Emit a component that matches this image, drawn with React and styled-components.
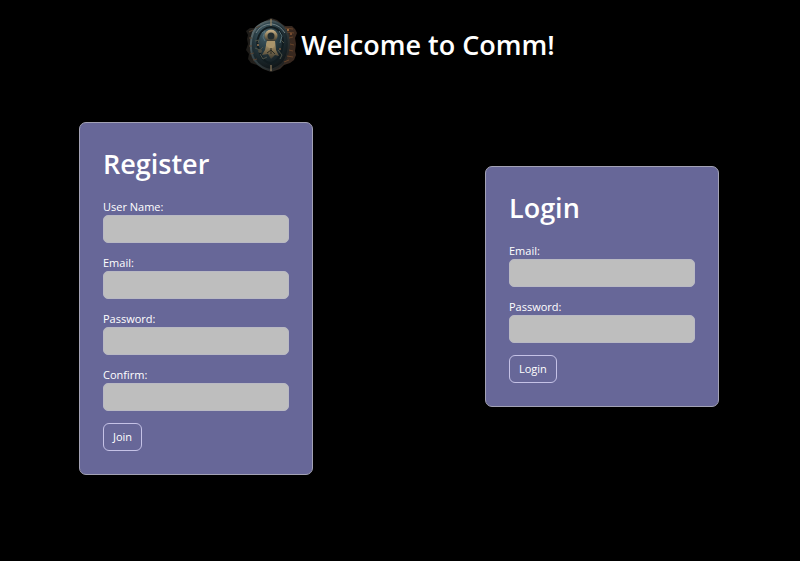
import React, { useId } from "react";
import styled, { createGlobalStyle } from "styled-components";

const GlobalStyle = createGlobalStyle`
  * { box-sizing: border-box; }
  body {
    margin: 0;
    background: #000;
    color: #fff;
    font-family: "Open Sans", "Segoe UI", sans-serif;
    font-size: 11px;
    line-height: 16px;
  }
`;

const Page = styled.div`
  min-height: 100vh;
`;

const Header = styled.header`
  display: flex;
  align-items: center;
  justify-content: center;
  gap: 4px;
  padding-top: 16px;
`;

const Crest = styled.svg`
  width: 52px;
  height: 58px;
  flex: none;
`;

const Title = styled.h1`
  margin: 0;
  font-size: 27px;
  line-height: 36px;
  font-weight: 600;
`;

const Forms = styled.main`
  display: grid;
  grid-template-columns: repeat(auto-fit, minmax(240px, 1fr));
  column-gap: 14px;
  row-gap: 24px;
  justify-items: center;
  align-items: start;
  padding: 48px 2px 24px 0;
`;

const Card = styled.form`
  width: 100%;
  max-width: 234px;
  margin-top: ${(p) => (p.$lowered ? "44px" : "0")};
  padding: 23px;
  border: 1px solid #a3a2b5;
  border-radius: 7px;
  background: #676798;
`;

const CardTitle = styled.h2`
  margin: 0 0 17px;
  font-size: 27px;
  line-height: 36px;
  font-weight: 600;
`;

const Field = styled.div`
  display: flex;
  flex-direction: column;
  margin-bottom: 12px;
`;

const Label = styled.label`
  line-height: 16px;
`;

const Input = styled.input`
  width: 100%;
  height: 28px;
  padding: 4px 8px;
  border: 1px solid #b9b9c3;
  border-radius: 5px;
  background: #bebebe;
  color: #212529;
  font: inherit;
`;

const Button = styled.button`
  display: block;
  height: 28px;
  padding: 0 9px;
  border: 1px solid #c5c2e6;
  border-radius: 6px;
  background: transparent;
  color: #fff;
  font: inherit;
  cursor: pointer;
`;

function LockCrest() {
  return (
    <Crest viewBox="0 0 52 58" aria-hidden="true">
      <defs>
        <linearGradient id="rim" x1="0" x2="1" y1="0" y2="0">
          <stop offset="0" stopColor="#1d1b18" />
          <stop offset=".5" stopColor="#2c2925" />
          <stop offset="1" stopColor="#3b281e" />
        </linearGradient>
        <linearGradient id="hoop" x1="0" x2="1" y1="0" y2="1">
          <stop offset="0" stopColor="#69797b" />
          <stop offset=".4" stopColor="#36454a" />
          <stop offset="1" stopColor="#1b1816" />
        </linearGradient>
        <radialGradient id="plate" cx=".4" cy=".25" r=".75">
          <stop offset="0" stopColor="#45606a" />
          <stop offset=".5" stopColor="#24363d" />
          <stop offset="1" stopColor="#0f1416" />
        </radialGradient>
        <linearGradient id="brass" x1="0" x2="0" y1="0" y2="1">
          <stop offset="0" stopColor="#c0ab83" />
          <stop offset=".5" stopColor="#827150" />
          <stop offset="1" stopColor="#3b3930" />
        </linearGradient>
      </defs>
      <path d="M26 2 32 4 37 8 40 10 47 10 50 13 52 17 50 22 51 28 50 35 51 39 49 44 45 47 39 49 35 53 26 56 18 53 12 49 6 47 3 43 4 38 1 34 3 28 2 23 3 19 1 15 5 12 9 12 14 8 20 5Z" fill="url(#rim)" />
      <path d="M26 5C35 6 41 12 43 20C45 30 43 42 37 48C33 52 29 53 26 54C19 53 13 49 9 43C5 36 5 24 8 17C11 10 18 6 26 5Z" fill="url(#plate)" stroke="url(#hoop)" strokeWidth="2" />
      <path d="M11 17Q16 8 27 8Q35 9 40 17" fill="none" stroke="#728184" strokeWidth="1" />
      <path d="M14 34C10 25 14 12 26 11C36 12 40 22 37 33C36 40 31 47 25 47C19 46 15 40 14 34Z" fill="none" stroke="#111c20" strokeWidth="2" />
      <path d="M40 12 48 13M42 16 49 17M44 22 48 21M45 28 49 29M44 34 48 35M42 40 48 41M39 46 44 44" stroke="#654329" strokeWidth="1" />
      <path d="M4 16 8 14M4 22 7 22M4 30 7 30M5 38 9 37M8 44 12 43M11 12 15 10" stroke="#554333" strokeWidth="1" />
      <path d="M10 25 14 24 13 27M10 32 15 34 18 31M15 38 18 43 22 41M33 34 37 39 35 43M36 24 39 27" fill="none" stroke="#4d5247" strokeWidth="1" />
      <path d="M17 17 20 15 18 21 20 25M34 15 37 20 35 27" fill="none" stroke="#587178" strokeWidth="1" />
      <path d="M22 25 20 34 17 39 23 38 26 43 30 39 34 40 31 34 30 25Z" fill="url(#brass)" />
      <circle cx="26" cy="20" r="5" fill="#222c2e" stroke="url(#brass)" strokeWidth="3" />
      <path d="M22 25H30V29L28 32H24L21 29Z" fill="#a9946b" />
      <path d="M26 32V38M22 37 26 34 30 38" fill="none" stroke="#282b24" strokeWidth="1" />
      <path d="M26 3V10M26 49V55" stroke="#aa916a" strokeWidth="1" />
      <circle cx="13" cy="29" r="1" fill="#9b7650" />
      <circle cx="43" cy="14" r="1" fill="#b47943" />
      <circle cx="46" cy="18" r="1" fill="#8d5936" />
      <circle cx="15" cy="35" r="2" fill="#4b4b3f" />
      <circle cx="35" cy="33" r="1" fill="#76583d" />
    </Crest>
  );
}

function FormField({ label, type = "text" }) {
  const id = useId();
  return (
    <Field>
      <Label htmlFor={id}>{label}</Label>
      <Input id={id} type={type} />
    </Field>
  );
}

export default function App() {
  const stay = (event) => event.preventDefault();
  return (
    <Page>
      <GlobalStyle />
      <Header>
        <LockCrest />
        <Title>Welcome to Comm!</Title>
      </Header>
      <Forms>
        <Card onSubmit={stay}>
          <CardTitle>Register</CardTitle>
          <FormField label="User Name:" />
          <FormField label="Email:" type="email" />
          <FormField label="Password:" type="password" />
          <FormField label="Confirm:" type="password" />
          <Button type="submit">Join</Button>
        </Card>
        <Card onSubmit={stay} $lowered>
          <CardTitle>Login</CardTitle>
          <FormField label="Email:" type="email" />
          <FormField label="Password:" type="password" />
          <Button type="submit">Login</Button>
        </Card>
      </Forms>
    </Page>
  );
}
